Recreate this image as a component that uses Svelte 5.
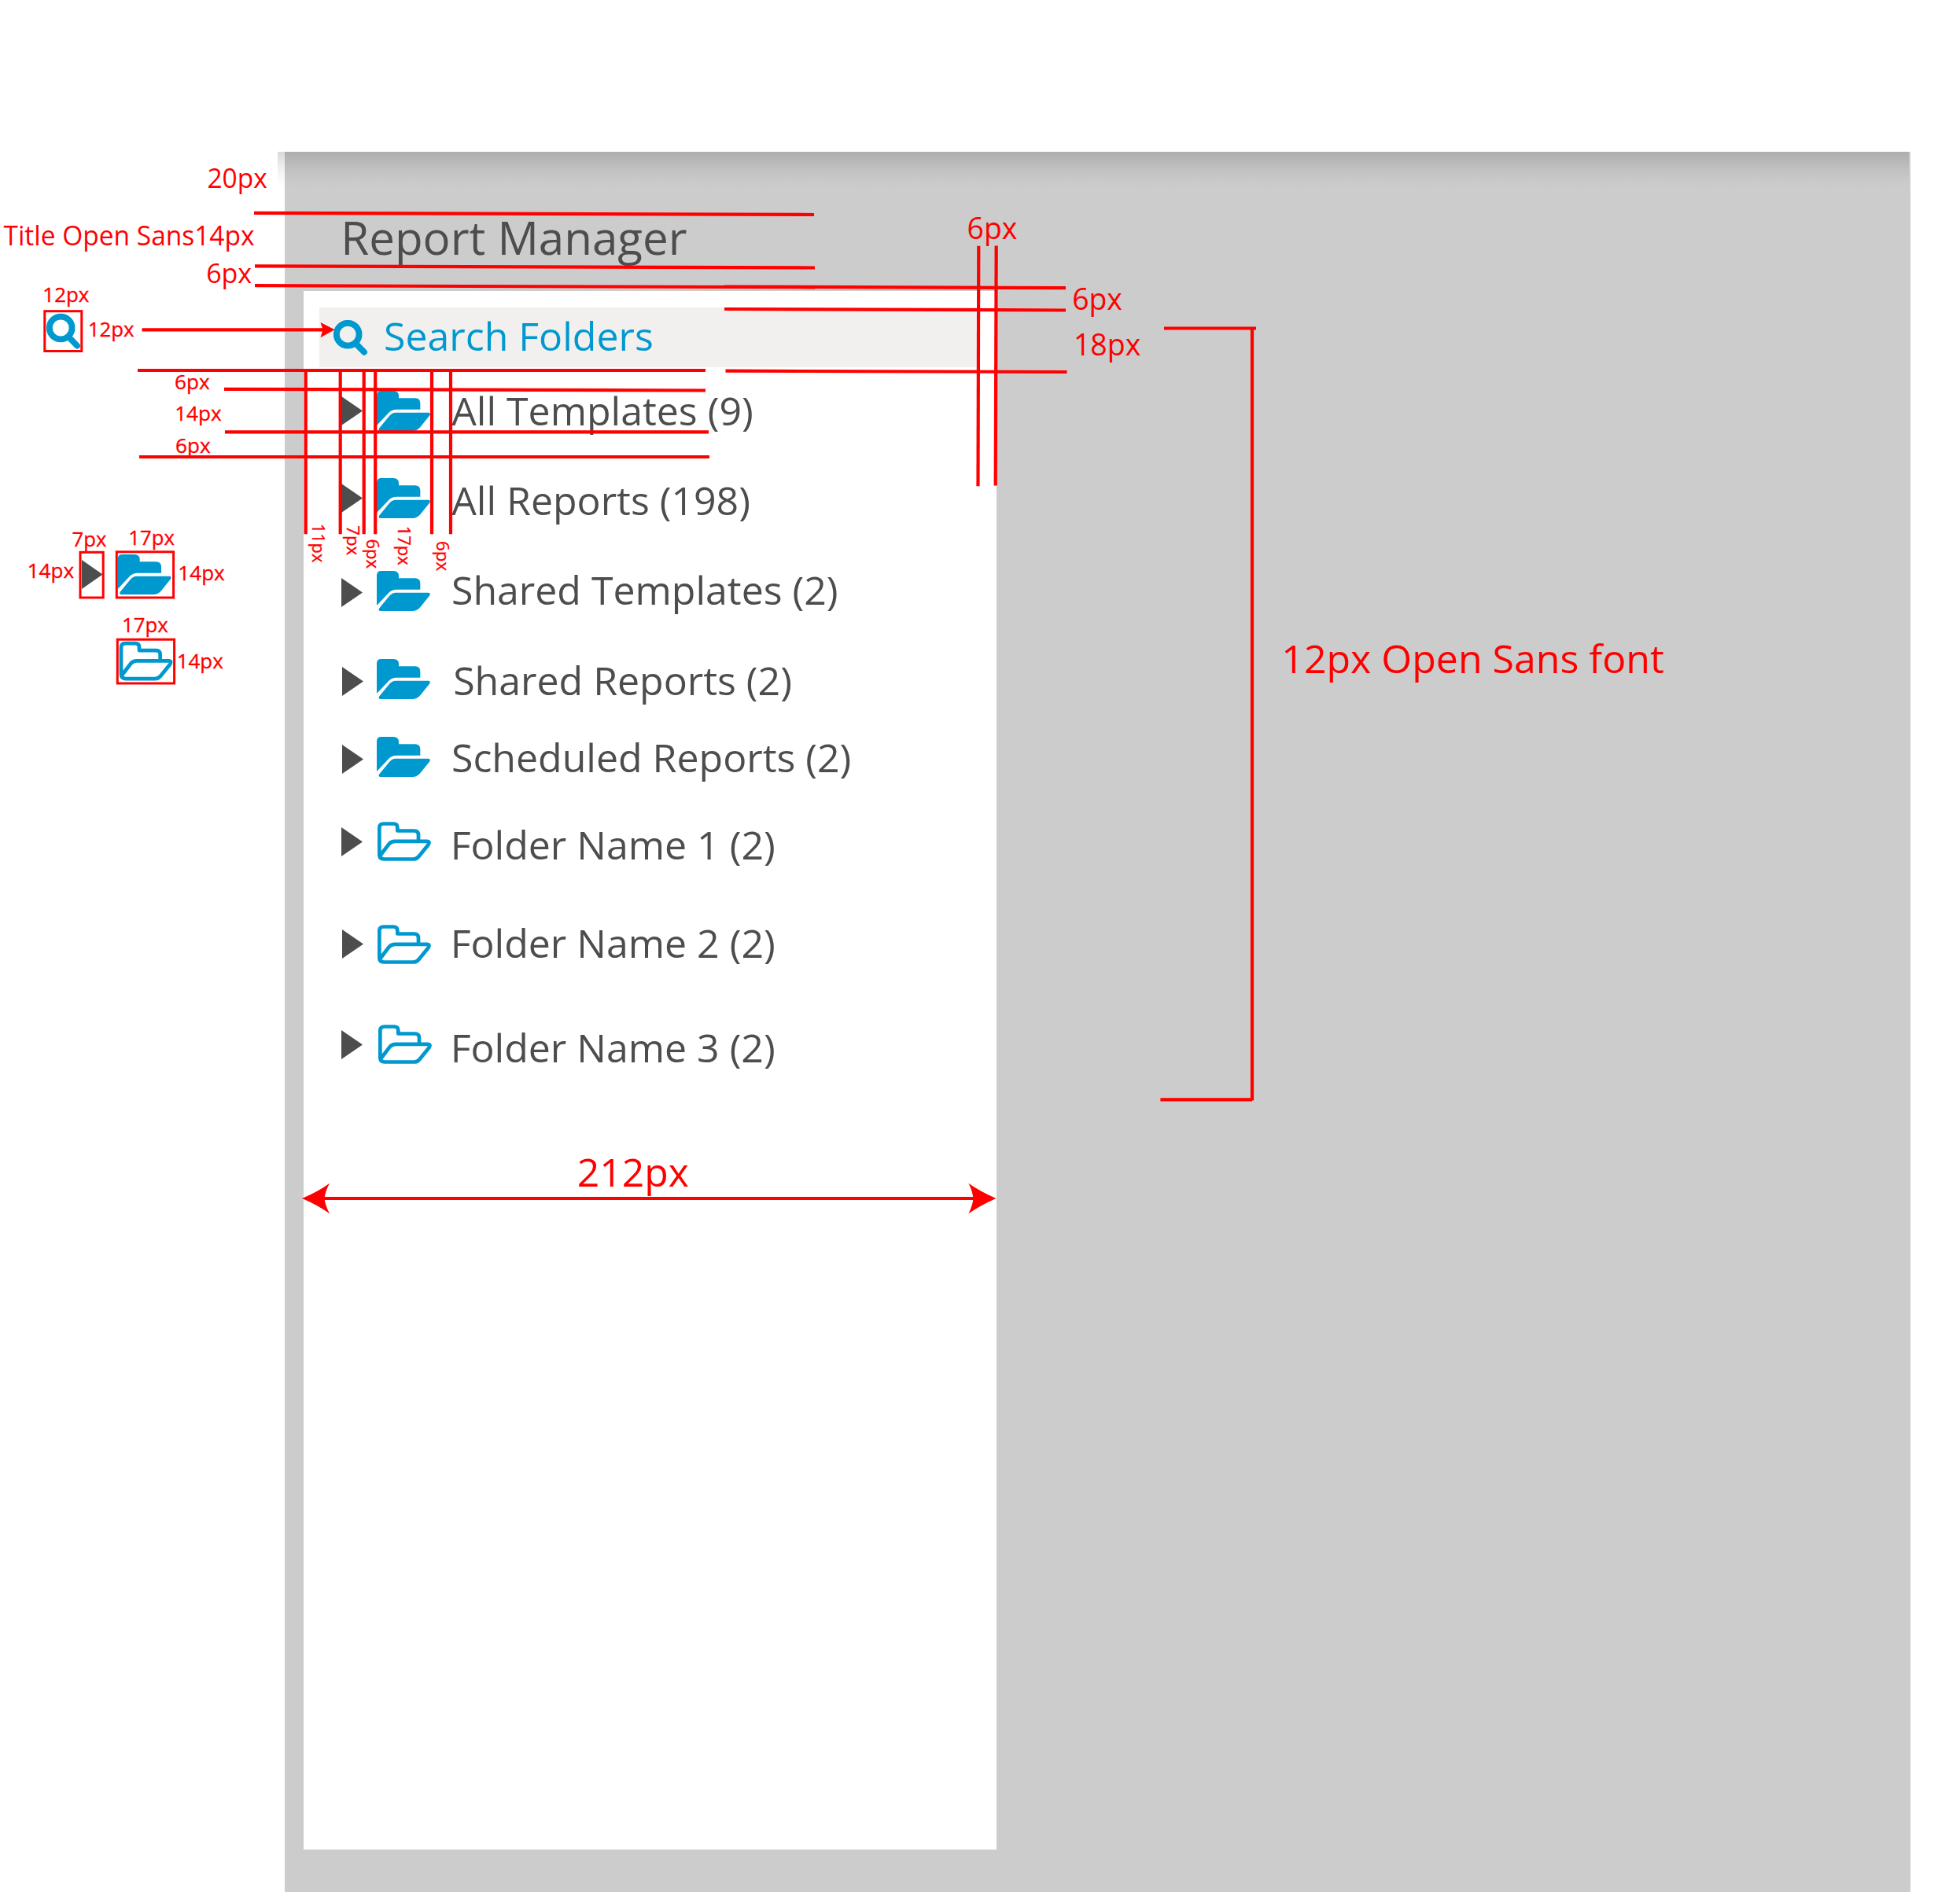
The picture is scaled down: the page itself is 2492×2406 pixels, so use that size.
<script>
  // Vertical rhythm of the folder tree; offsets are measured from each row's top edge.
  const folders = [
    { name: 'All Templates (9)', height: 111, arrow: 7, label: 0, open: false, shift: 0, nudge: 0, indent: 1.5 },
    { name: 'All Reports (198)', height: 118, arrow: 7.3, label: 3, open: false, shift: 0, nudge: 0, indent: 1.5 },
    { name: 'Shared Templates (2)', height: 112.3, arrow: 9.3, label: -1, open: false, shift: 0, nudge: 0, indent: 1.3 },
    { name: 'Shared Reports (2)', height: 99, arrow: 9.4, label: 1.7, open: false, shift: 1, nudge: 0, indent: 3.5 },
    { name: 'Scheduled Reports (2)', height: 108.2, arrow: 9.4, label: 1, open: false, shift: 1, nudge: 0, indent: 1.3 },
    { name: 'Folder Name 1 (2)', height: 130.2, arrow: 6.8, label: 3.3, open: true, shift: 0, nudge: 0, indent: 0 },
    { name: 'Folder Name 2 (2)', height: 127.3, arrow: 6.6, label: -2, open: true, shift: 1, nudge: 0, indent: 0 },
    { name: 'Folder Name 3 (2)', height: 60, arrow: 6.7, label: 3.7, open: true, shift: 0, nudge: 1.3, indent: -1.3 }
  ];

  const lines = [
    [323, 270.8, 1035, 273], [324, 338.3, 1036, 340.5], [324, 363.2, 1036, 365.3],
    [921, 364.6, 1355, 366.2], [921, 393, 1355, 394.5], [922.5, 471.7, 1356.5, 473],
    [175, 471, 897, 471], [285, 494.8, 897, 496.5], [286, 549.3, 901, 549.3], [177, 581, 902, 581],
    [388.7, 471, 388.7, 679.3], [432.7, 471, 432.7, 679.3], [462.7, 471, 462.7, 679.3],
    [477.2, 471, 477.2, 679.3], [549, 471, 549, 679.3], [573, 473, 573, 679.3],
    [1244.3, 312.7, 1243.5, 618.3], [1266.7, 312.5, 1265.7, 617.5],
    [1480, 417.5, 1597, 417.5], [1592, 417, 1592, 1399.5], [1475.4, 1398.3, 1592, 1398.3],
    [405, 1524, 1245, 1524], [180.5, 419.3, 412, 419.3]
  ];

  const boxes = [
    [56.8, 395.7, 47, 50.8], [102, 702.3, 29.2, 57.7],
    [148.3, 701.8, 72.3, 58.2], [149.3, 813.2, 72.3, 55.8]
  ];

  // [text, left, right, baseline, size]
  const notes = [
    ['20px', 265, 339.3, 239, 34], ['Title Open Sans14px', 5, 323, 312, 34.5], ['6px', 264, 319.6, 360, 34],
    ['12px', 56.7, 113, 384, 26], ['12px', 114, 170.2, 428, 26],
    ['6px', 223.5, 266.3, 495.3, 26], ['14px', 224.5, 281.3, 535.3, 26], ['6px', 224.5, 267.3, 575.7, 26],
    ['7px', 92.7, 135, 694.5, 26], ['17px', 165.7, 221.5, 693.3, 26],
    ['14px', 37, 93.7, 735.3, 26], ['14px', 228.7, 285.3, 738.3, 26],
    ['17px', 157.3, 213.3, 804, 26], ['14px', 227, 283.3, 849.7, 26],
    ['6px', 1231.7, 1292.8, 304, 38], ['6px', 1365.3, 1426.3, 393.7, 38], ['18px', 1368.3, 1449.7, 452, 38],
    ['212px', 736, 875, 1509.3, 50], ['12px Open Sans font', 1633.8, 2115, 855.5, 50]
  ];

  // Sideways labels: [text, baseline x, top, bottom, size]
  const sideNotes = [
    ['11px', 396.7, 667.7, 715, 22.5], ['7px', 441, 669.3, 705.7, 22.5], ['6px', 465.7, 686.7, 722.7, 22.5],
    ['17px', 506, 670.7, 718.3, 22.5], ['6px', 555.3, 689.3, 725.7, 22.5]
  ];

  const bearing = { 1: 0.09, 2: 0.045, 6: 0.055, 7: 0.045, T: 0.015 };
  const lead = (text, size) => bearing[text[0]] * size;
  const span = (text, a, b, size) => b - a + lead(text, size) + 0.015 * size;
</script>

{#snippet solidFolder()}
  <path d="M0 132V17Q0 0 17 0H64Q84 0 84 20V28H146Q166 28 166 48V71H76Q58 71 46 83Z" />
  <path d="M72 83H198Q206 84 202 94L167 137Q154 153 136 153H12Q5 151 9 143L46 98Q58 83 72 83Z" />
{/snippet}

{#snippet outlineFolder()}
  <path d="M156 74V50Q156 34 140 34H76V22Q76 7 61 7H23Q7 7 7 23V125Q7 142 24 142H136Q149 142 157 132L193 88Q202 74 188 74H66Q53 74 44 84L9 130" />
{/snippet}

{#snippet lens()}
  <circle cx="18.2" cy="18.2" r="14.4" />
  <path d="M28.5 30L39 40.8" />
{/snippet}

<main class="board">
  <section class="surface">
    <div class="shade"></div>
    <h1>Report Manager</h1>
    <div class="panel">
      <div class="search">
        <svg class="lens" viewBox="0 0 44 46">{@render lens()}</svg>
        <span>Search Folders</span>
      </div>
      <ul>
        {#each folders as f}
          <li style="--h:{f.height}px;--arrow:{f.arrow}px;--label:{f.label}px;--shift:{f.shift}px;--nudge:{f.nudge}px;--indent:{f.indent}px">
            <svg class="arrow" viewBox="0 0 27 37"><path d="M0 0L27 18.5L0 37Z" /></svg>
            {#if f.open}
              <svg class="outline" viewBox="0 0 204 149">{@render outlineFolder()}</svg>
            {:else}
              <svg class="solid" viewBox="0 0 203 153">{@render solidFolder()}</svg>
            {/if}
            <span>{f.name}</span>
          </li>
        {/each}
      </ul>
    </div>
  </section>

  <svg class="redlines" viewBox="0 0 2492 2406">
    <g class="lens" transform="translate(59 398.8)">{@render lens()}</g>
    <path class="dark" d="M104 712L130.5 730.5L104 749Z" />
    <g class="solid" transform="translate(149.7 705) scale(.3333)">{@render solidFolder()}</g>
    <g class="outline" transform="translate(151.7 815.7) scale(.3333)">{@render outlineFolder()}</g>

    {#each lines as [x1, y1, x2, y2]}
      <line {x1} {y1} {x2} {y2} />
    {/each}
    {#each boxes as [x, y, width, height]}
      <rect {x} {y} {width} {height} />
    {/each}
    <path class="head" d="M384 1524Q405 1515 419 1504.7Q413.5 1515 412.5 1524Q413.5 1533 419 1543.3Q405 1533 384 1524Z" />
    <path class="head" d="M1266.5 1524Q1246 1515 1231.5 1504.7Q1236.5 1515 1237.5 1524Q1236.5 1533 1231.5 1543.3Q1246 1533 1266.5 1524Z" />
    <path class="head" d="M425.5 419.3L407.5 410L410.5 419.3L407.5 429.3Z" />

    {#each notes as [text, a, b, y, size]}
      <text class:small={size < 30} x={a - lead(text, size)} {y} font-size={size} textLength={span(text, a, b, size)} lengthAdjust="spacingAndGlyphs">{text}</text>
    {/each}
    {#each sideNotes as [text, x, a, b, size]}
      <text class="small" transform="translate({x} {a - lead(text, size)}) rotate(90)" font-size={size} textLength={span(text, a, b, size)} lengthAdjust="spacingAndGlyphs">{text}</text>
    {/each}
  </svg>
</main>

<style>
  :global(body) {
    background: #fff;
  }

  .board {
    position: relative;
    box-sizing: border-box;
    width: 2492px;
    height: 2406px;
    padding: 193px 63px 0 362px;
    overflow: hidden;
    font-family: 'Open Sans', 'Noto Sans', sans-serif;
    color: #4d4d4d;
  }

  .surface {
    position: relative;
    box-sizing: border-box;
    height: 2213px;
    padding: 81px 0 0 24.4px;
    background: #ccc;
  }

  .shade {
    position: absolute;
    top: 0;
    left: -9px;
    right: 2px;
    height: 48px;
    background: linear-gradient(rgba(0, 0, 0, 0.15), rgba(0, 0, 0, 0.06) 45%, rgba(0, 0, 0, 0.015) 75%, transparent);
  }

  h1 {
    height: 95.7px;
    margin: 0;
    padding-left: 46.8px;
    font-size: 58.3px;
    line-height: 56px;
    font-weight: 400;
    white-space: nowrap;
  }

  .panel {
    box-sizing: border-box;
    width: 880.3px;
    height: 1982.3px;
    padding: 21.3px 22px 0 19.6px;
    background: #fff;
  }

  .search {
    display: flex;
    height: 76.5px;
    background: #f2f0ef;
    color: #0099cf;
    font-size: 50px;
    line-height: 50px;
    white-space: nowrap;
  }

  .search .lens {
    width: 44px;
    height: 46px;
    margin: 16px 20px 0 18px;
  }

  .search span {
    margin-top: 11px;
  }

  ul {
    margin: 0;
    padding: 29.5px 0 0 28px;
    list-style: none;
  }

  li {
    display: flex;
    align-items: flex-start;
    height: var(--h);
    font-size: 50px;
    line-height: 50px;
    white-space: nowrap;
  }

  .arrow {
    flex: none;
    width: 27px;
    height: 37px;
    margin: var(--arrow) calc(18px - var(--shift)) 0 var(--shift);
    fill: #4d4d4d;
  }

  li .solid,
  li .outline {
    flex: none;
    width: 67.7px;
    height: 51px;
  }

  li .outline {
    width: 68px;
    height: 50px;
    margin: 0 -1.3px 0 calc(1px + var(--nudge));
  }

  li span {
    margin: var(--label) 0 0 calc(26px + var(--indent));
  }

  .lens {
    fill: none;
    stroke: #0099cf;
    stroke-width: 7.8;
    stroke-linecap: round;
  }

  .solid {
    fill: #0099cf;
  }

  .outline {
    fill: none;
    stroke: #0099cf;
    stroke-width: 14.2;
    stroke-linejoin: round;
  }

  .redlines {
    position: absolute;
    inset: 0;
    width: 2492px;
    height: 2406px;
  }

  .redlines line {
    stroke: #f00;
    stroke-width: 4.2;
  }

  .redlines rect {
    fill: none;
    stroke: #f00;
    stroke-width: 3;
  }

  .redlines text,
  .head {
    fill: #f00;
  }

  .redlines .small {
    stroke: #f00;
    stroke-width: 0.35;
  }

  .dark {
    fill: #4d4d4d;
  }
</style>
